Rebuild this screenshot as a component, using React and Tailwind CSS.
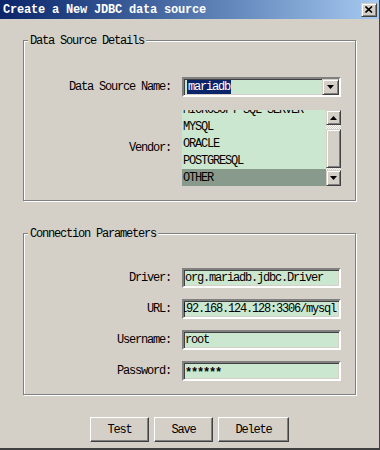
const mono = "font-['Liberation_Mono',monospace] text-[12px] tracking-[-1.2px] leading-[14px] text-black";

const sunken =
  "border-2 border-t-[#808080] border-l-[#808080] border-b-white border-r-white shadow-[inset_1px_1px_0_#404040,inset_-1px_-1px_0_#d4d0c8]";

const raised =
  "border border-t-[#d4d0c8] border-l-[#d4d0c8] border-b-[#404040] border-r-[#404040] shadow-[inset_1px_1px_0_#fff,inset_-1px_-1px_0_#808080] bg-[#d4d0c8]";

function DownArrow() {
  return (
    <svg width="7" height="4" viewBox="0 0 7 4">
      <path d="M0 0h7L3.5 4z" fill="#000" />
    </svg>
  );
}

function UpArrow() {
  return (
    <svg width="7" height="4" viewBox="0 0 7 4">
      <path d="M0 4h7L3.5 0z" fill="#000" />
    </svg>
  );
}

function GroupBox({ title, height, className, children }) {
  return (
    <div
      className={`relative ml-[23px] w-[333px] border border-[#808080] shadow-[inset_1px_1px_0_#fff,1px_1px_0_#fff] ${className}`}
      style={{ height }}
    >
      <span className={`${mono} absolute -top-[7px] left-[4px] bg-[#d4d0c8] px-[2px]`}>
        {title}
      </span>
      {children}
    </div>
  );
}

function Row({ label, children }) {
  return (
    <div className="flex items-center">
      <div className={`${mono} w-[147px] text-right`}>{label}</div>
      <div className="ml-[11px]">{children}</div>
    </div>
  );
}

function Field({ value, shift }) {
  return (
    <div className={`${sunken} w-[159px] h-[20px] bg-[#cbe7cf] flex items-center overflow-hidden whitespace-nowrap pl-[1px]`}>
      <span className={`${mono} shrink-0 ${shift || ""}`}>{value}</span>
    </div>
  );
}

const checker =
  "bg-[image:repeating-conic-gradient(#ffffff_0_25%,#d4d0c8_0_50%)] bg-size-[2px_2px]";

export default function App() {
  const vendors = ["MICROSOFT SQL SERVER", "MYSQL", "ORACLE", "POSTGRESQL", "OTHER"];

  return (
    <div className="w-[380px] h-[450px] bg-[#d4d0c8] flex flex-col border-r border-b-2 border-r-[#404040] border-b-[#404040] overflow-hidden">
      {/* title bar */}
      <div className="h-[19px] flex items-center justify-between pl-[3px] pr-[2px] bg-linear-to-r from-[#0a246a] to-[#a6caf0]">
        <span className="font-['Liberation_Mono',monospace] font-bold text-[12px] tracking-[-0.2px] text-white leading-[14px]">
          Create a New JDBC data source
        </span>
        <div className={`${raised} w-[16px] h-[14px] flex items-center justify-center`}>
          <svg width="8" height="7" viewBox="0 0 8 7">
            <path d="M0.5 0.5L7 6.5M7 0.5L0.5 6.5" stroke="#000" strokeWidth="1.6" />
          </svg>
        </div>
      </div>

      <GroupBox title="Data Source Details" height={161} className="mt-[21px]">
        <div className="pt-[36px] flex flex-col gap-[13px]">
          <Row label="Data Source Name:">
            <div className={`${sunken} w-[159px] h-[20px] bg-[#cbe7cf] flex items-center`}>
              <span className={`${mono} ml-[3px] bg-[#0a246a] text-white pl-[1px] pr-[1px] leading-[14px]`}>
                mariadb
              </span>
              <div className={`${raised} ml-auto w-[17px] h-[16px] flex items-center justify-center`}>
                <DownArrow />
              </div>
            </div>
          </Row>
          <Row label="Vendor:">
            <div className="flex w-[159px] h-[76px]">
              <div className="w-[144px] h-[76px] bg-[#cbe7cf] overflow-hidden">
                <div className="-mt-[9px]">
                  {vendors.map((v) => (
                    <div
                      key={v}
                      className={`h-[17px] flex items-center pl-[1px] ${
                        v === "OTHER" ? "bg-[#889a8b]" : ""
                      }`}
                    >
                      <span className={mono}>{v}</span>
                    </div>
                  ))}
                </div>
              </div>
              <div className="w-[15px] h-[76px] flex flex-col">
                <div className={`${raised} h-[15px] flex items-center justify-center`}>
                  <UpArrow />
                </div>
                <div className={`${checker} h-[4px]`} />
                <div className={`${raised} h-[39px]`} />
                <div className={`${checker} h-[2px]`} />
                <div className={`${raised} h-[16px] flex items-center justify-center`}>
                  <DownArrow />
                </div>
              </div>
            </div>
          </Row>
        </div>
      </GroupBox>

      <GroupBox title="Connection Parameters" height={162} className="mt-[32px]">
        <div className="pt-[34px] flex flex-col gap-[11px]">
          <Row label="Driver:">
            <Field value="org.mariadb.jdbc.Driver" />
          </Row>
          <Row label="URL:">
            <Field value="jdbc:mysql://192.168.124.128:3306/mysql" shift="-ml-[83px]" />
          </Row>
          <Row label="Username:">
            <Field value="root" />
          </Row>
          <Row label="Password:">
            <Field value="******" shift="font-bold pt-[3px]" />
          </Row>
        </div>
      </GroupBox>

      <div className="mt-[22px] flex justify-center gap-[5px]">
        {[
          ["Test", "w-[59px]"],
          ["Save", "w-[59px]"],
          ["Delete", "w-[71px]"],
        ].map(([t, w]) => (
          <button
            key={t}
            className={`border border-t-white border-l-white border-b-[#404040] border-r-[#404040] shadow-[inset_-1px_-1px_0_#808080] bg-[#d4d0c8] h-[25px] ${w} ${mono}`}
          >
            {t}
          </button>
        ))}
      </div>
    </div>
  );
}
